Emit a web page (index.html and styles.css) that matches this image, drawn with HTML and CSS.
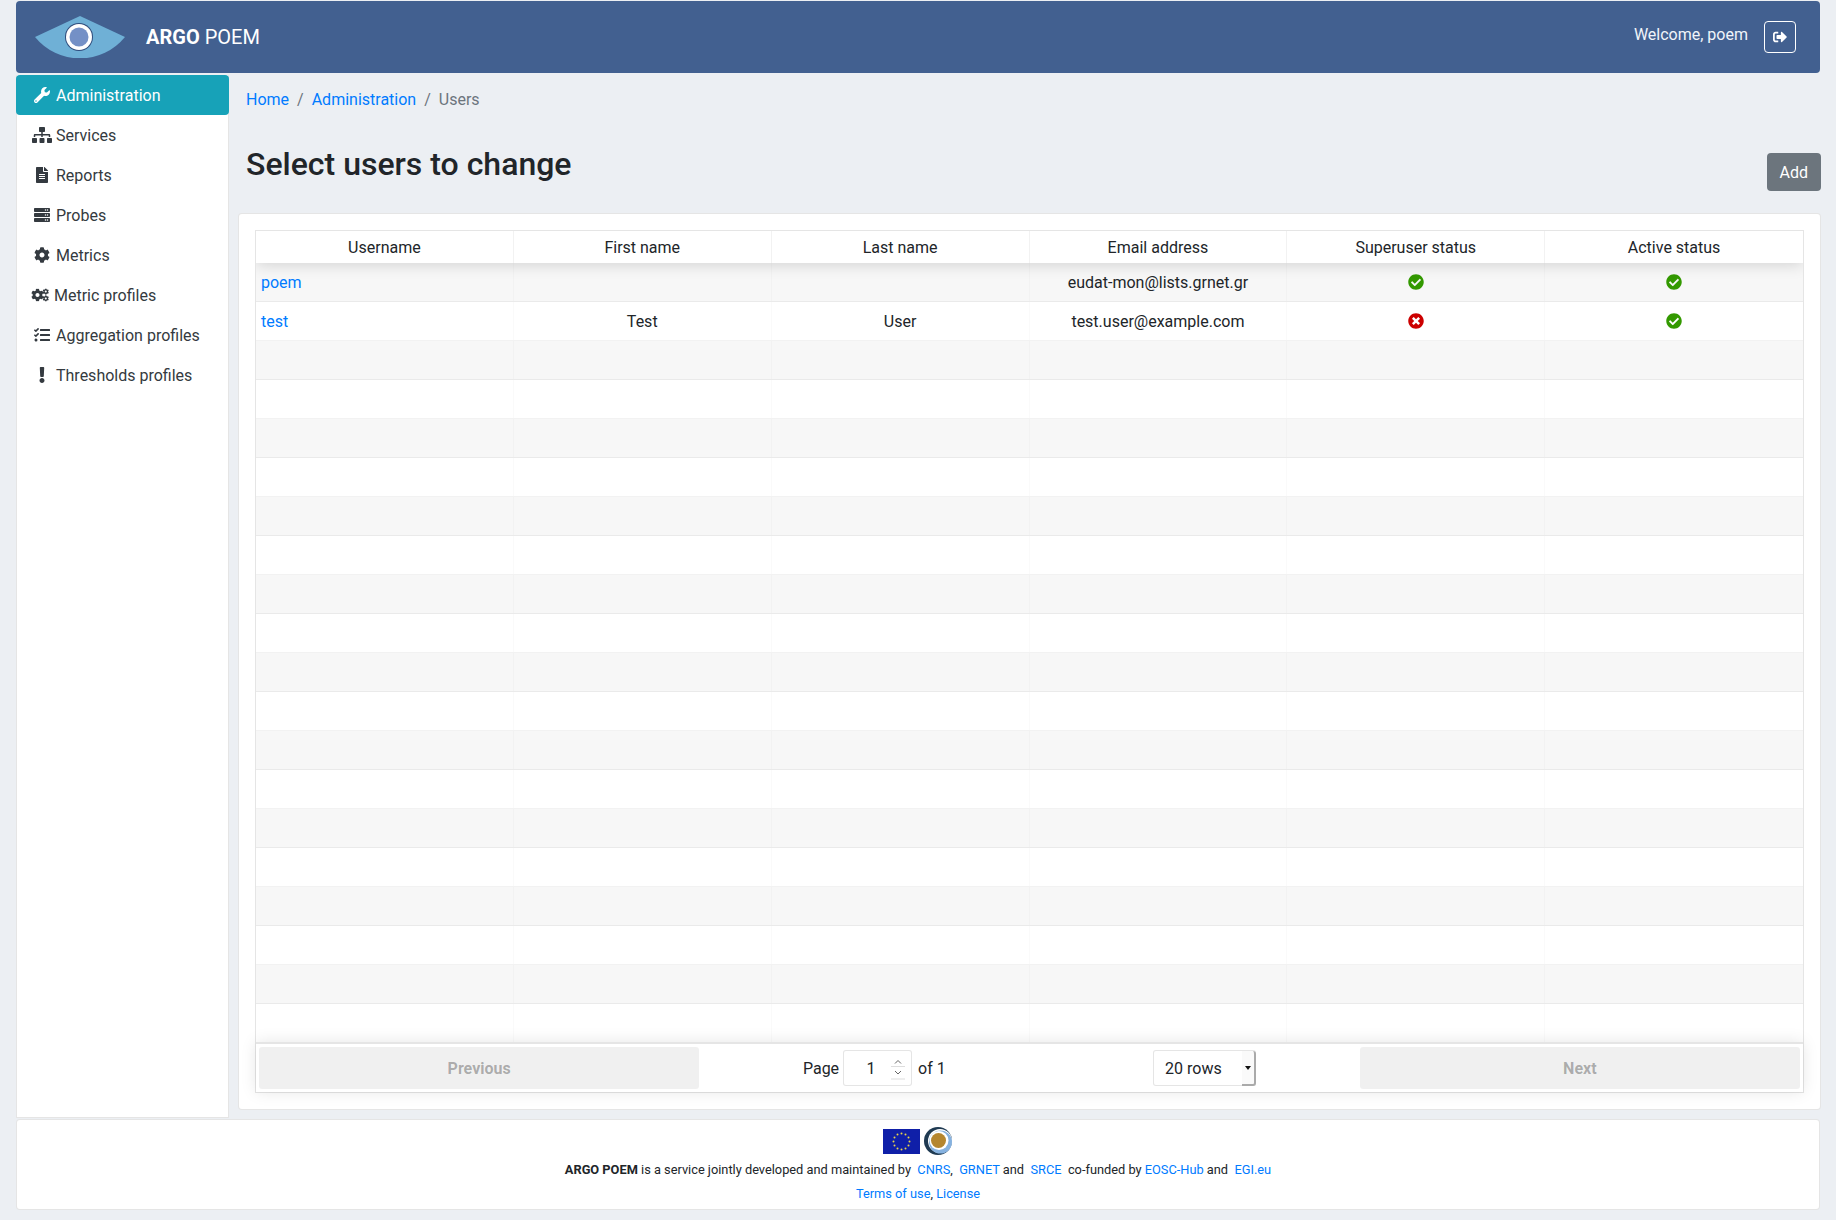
FILE: index.html
```html
<!DOCTYPE html>
<html lang="en">
<head>
  <meta charset="UTF-8">
  <title>ARGO POEM</title>
  <link rel="stylesheet" href="styles.css">
</head>
<body>
  <svg class="sprite" xmlns="http://www.w3.org/2000/svg">
    <symbol id="i-wrench" viewBox="0 0 512 512"><path d="M507.73 109.1c-2.24-9.03-13.54-12.09-20.12-5.51l-74.36 74.36-67.88-11.31-11.31-67.88 74.36-74.36c6.62-6.62 3.43-17.9-5.66-20.16-47.38-11.74-99.55.91-136.58 37.93-39.64 39.64-50.55 97.1-34.05 147.2L18.74 402.76c-24.99 24.99-24.99 65.51 0 90.5 24.99 24.99 65.51 24.99 90.5 0l213.21-213.21c50.12 16.71 107.47 5.68 147.37-34.22 37.07-37.07 49.7-89.32 37.91-136.73zM64 472c-13.25 0-24-10.75-24-24 0-13.26 10.75-24 24-24s24 10.74 24 24c0 13.25-10.75 24-24 24z"/></symbol>
    <symbol id="i-sitemap" viewBox="0 0 640 512"><path d="M128 352H32c-17.67 0-32 14.33-32 32v96c0 17.67 14.33 32 32 32h96c17.67 0 32-14.33 32-32v-96c0-17.67-14.33-32-32-32zm-24-80h192v48h48v-48h192v48h48v-57.59c0-21.17-17.23-38.41-38.41-38.41H344v-64h40c17.67 0 32-14.33 32-32V32c0-17.67-14.33-32-32-32H256c-17.67 0-32 14.33-32 32v96c0 17.67 14.33 32 32 32h40v64H94.41C73.23 224 56 241.23 56 262.41V320h48v-48zm264 80h-96c-17.67 0-32 14.33-32 32v96c0 17.67 14.33 32 32 32h96c17.67 0 32-14.33 32-32v-96c0-17.67-14.33-32-32-32zm240 0h-96c-17.67 0-32 14.33-32 32v96c0 17.67 14.33 32 32 32h96c17.67 0 32-14.33 32-32v-96c0-17.67-14.33-32-32-32z"/></symbol>
    <symbol id="i-file" viewBox="0 0 384 512"><path d="M224 136V0H24C10.7 0 0 10.7 0 24v464c0 13.3 10.7 24 24 24h336c13.3 0 24-10.7 24-24V160H248c-13.2 0-24-10.8-24-24zm64 236c0 6.6-5.4 12-12 12H108c-6.6 0-12-5.4-12-12v-8c0-6.6 5.4-12 12-12h168c6.6 0 12 5.4 12 12v8zm0-64c0 6.6-5.4 12-12 12H108c-6.6 0-12-5.4-12-12v-8c0-6.6 5.4-12 12-12h168c6.6 0 12 5.4 12 12v8zm0-72v8c0 6.6-5.4 12-12 12H108c-6.6 0-12-5.4-12-12v-8c0-6.6 5.4-12 12-12h168c6.6 0 12 5.4 12 12zm96-114.1v6.1H256V0h6.1c6.4 0 12.5 2.5 17 7l97.9 98c4.5 4.5 7 10.6 7 16.9z"/></symbol>
    <symbol id="i-server" viewBox="0 0 512 512"><path d="M480 160H32c-17.673 0-32-14.327-32-32V64c0-17.673 14.327-32 32-32h448c17.673 0 32 14.327 32 32v64c0 17.673-14.327 32-32 32zm-48-88c-13.255 0-24 10.745-24 24s10.745 24 24 24 24-10.745 24-24-10.745-24-24-24zm-64 0c-13.255 0-24 10.745-24 24s10.745 24 24 24 24-10.745 24-24-10.745-24-24-24zm112 248H32c-17.673 0-32-14.327-32-32v-64c0-17.673 14.327-32 32-32h448c17.673 0 32 14.327 32 32v64c0 17.673-14.327 32-32 32zm-48-88c-13.255 0-24 10.745-24 24s10.745 24 24 24 24-10.745 24-24-10.745-24-24-24zm-64 0c-13.255 0-24 10.745-24 24s10.745 24 24 24 24-10.745 24-24-10.745-24-24-24zm112 248H32c-17.673 0-32-14.327-32-32v-64c0-17.673 14.327-32 32-32h448c17.673 0 32 14.327 32 32v64c0 17.673-14.327 32-32 32zm-48-88c-13.255 0-24 10.745-24 24s10.745 24 24 24 24-10.745 24-24-10.745-24-24-24zm-64 0c-13.255 0-24 10.745-24 24s10.745 24 24 24 24-10.745 24-24-10.745-24-24-24z"/></symbol>
    <symbol id="i-cog" viewBox="0 0 512 512"><path d="M487.4 315.7l-42.6-24.6c4.3-23.2 4.3-47 0-70.2l42.6-24.6c4.9-2.8 7.1-8.6 5.5-14-11.1-35.6-30-67.8-54.7-94.6-3.8-4.1-10-5.1-14.8-2.3L380.8 110c-17.9-15.4-38.5-27.3-60.8-35.1V25.8c0-5.6-3.9-10.5-9.4-11.7-36.7-8.2-74.3-7.8-109.2 0-5.5 1.2-9.4 6.1-9.4 11.7V75c-22.2 7.9-42.8 19.8-60.8 35.1L88.7 85.5c-4.9-2.8-11-1.9-14.8 2.3-24.7 26.7-43.6 58.9-54.7 94.6-1.7 5.4.6 11.2 5.5 14L67.3 221c-4.3 23.2-4.3 47 0 70.2l-42.6 24.6c-4.9 2.8-7.1 8.6-5.5 14 11.1 35.6 30 67.8 54.7 94.6 3.8 4.1 10 5.1 14.8 2.3l42.6-24.6c17.9 15.4 38.5 27.3 60.8 35.1v49.2c0 5.6 3.9 10.5 9.4 11.7 36.7 8.2 74.3 7.8 109.2 0 5.5-1.2 9.4-6.1 9.4-11.7v-49.2c22.2-7.9 42.8-19.8 60.8-35.1l42.6 24.6c4.9 2.8 11 1.9 14.8-2.3 24.7-26.7 43.6-58.9 54.7-94.6 1.5-5.5-.7-11.3-5.6-14.1zM256 336c-44.1 0-80-35.9-80-80s35.9-80 80-80 80 35.9 80 80-35.9 80-80 80z"/></symbol>
    <symbol id="i-cogs" viewBox="0 0 640 512"><use href="#i-cog" x="0" y="48" width="416" height="416"/><use href="#i-cog" x="370" y="45" width="205" height="205"/><use href="#i-cog" x="370" y="262" width="205" height="205"/></symbol>
    <symbol id="i-tasks" viewBox="0 0 512 512"><path d="M139.61 35.5a12 12 0 0 0-17 0L58.93 98.81l-22.7-22.12a12 12 0 0 0-17 0L3.53 92.41a12 12 0 0 0 0 17l47.59 47.4a12.78 12.78 0 0 0 17.61 0l15.59-15.62L156.52 69a12.09 12.09 0 0 0 .09-17zm0 159.19a12 12 0 0 0-17 0l-63.68 63.72-22.7-22.1a12 12 0 0 0-17 0L3.53 252a12 12 0 0 0 0 17L51 316.5a12.77 12.77 0 0 0 17.6 0l15.7-15.69 72.2-72.22a12 12 0 0 0 .09-16.9zM64 368c-26.49 0-48.59 21.5-48.59 48S37.53 464 64 464a48 48 0 0 0 0-96zm432 16H208a16 16 0 0 0-16 16v32a16 16 0 0 0 16 16h288a16 16 0 0 0 16-16v-32a16 16 0 0 0-16-16zm0-320H208a16 16 0 0 0-16 16v32a16 16 0 0 0 16 16h288a16 16 0 0 0 16-16V80a16 16 0 0 0-16-16zm0 160H208a16 16 0 0 0-16 16v32a16 16 0 0 0 16 16h288a16 16 0 0 0 16-16v-32a16 16 0 0 0-16-16z"/></symbol>
    <symbol id="i-excl" viewBox="0 0 192 512"><path d="M176 432c0 44.112-35.888 80-80 80s-80-35.888-80-80 35.888-80 80-80 80 35.888 80 80zM25.26 25.199l13.6 272C39.499 309.972 50.041 320 62.83 320h66.34c12.789 0 23.331-10.028 23.97-22.801l13.6-272C167.425 11.49 156.496 0 142.77 0H49.23C35.504 0 24.575 11.49 25.26 25.199z"/></symbol>
    <symbol id="i-signout" viewBox="0 0 512 512"><path d="M497 273L329 441c-15 15-41 4.5-41-17v-96H152c-13.3 0-24-10.7-24-24v-96c0-13.3 10.7-24 24-24h136V88c0-21.4 25.9-32 41-17l168 168c9.3 9.4 9.3 24.6 0 34zM192 436v-40c0-6.6-5.4-12-12-12H96c-17.7 0-32-14.3-32-32V160c0-17.7 14.3-32 32-32h84c6.6 0 12-5.4 12-12V76c0-6.6-5.4-12-12-12H96c-53 0-96 43-96 96v192c0 53 43 96 96 96h84c6.6 0 12-5.4 12-12z"/></symbol>
    <symbol id="i-check" viewBox="0 0 512 512"><path d="M504 256c0 136.967-111.033 248-248 248S8 392.967 8 256 119.033 8 256 8s248 111.033 248 248zM227.314 387.314l184-184c6.248-6.248 6.248-16.379 0-22.627l-22.627-22.627c-6.248-6.249-16.379-6.249-22.628 0L216 308.118l-70.059-70.059c-6.248-6.248-16.379-6.248-22.628 0l-22.627 22.627c-6.248 6.248-6.248 16.379 0 22.627l104 104c6.249 6.249 16.379 6.249 22.628.001z"/></symbol>
    <symbol id="i-times" viewBox="0 0 512 512"><path d="M256 8C119 8 8 119 8 256s111 248 248 248 248-111 248-248S393 8 256 8zm121.6 313.1c4.7 4.7 4.7 12.3 0 17L338 377.6c-4.7 4.7-12.3 4.7-17 0L256 312l-65.1 65.6c-4.7 4.7-12.3 4.7-17 0L134.4 338c-4.7-4.7-4.7-12.3 0-17l65.6-65-65.6-65.1c-4.7-4.7-4.7-12.3 0-17l39.6-39.6c4.7-4.7 12.3-4.7 17 0l65 65.7 65.1-65.6c4.7-4.7 12.3-4.7 17 0l39.6 39.6c4.7 4.7 4.7 12.3 0 17L312 256l65.6 65.1z"/></symbol>
  </svg>

  <div class="page">
    <header class="topbar">
      <div class="brand">
        <svg class="logo" viewBox="0 0 90 42">
          <path d="M0 21 L45 0 L90 21 A58 58 0 0 1 0 21 Z" fill="#6fb0d6"/>
          <circle cx="44" cy="21" r="14" fill="#2f4c7c"/>
          <circle cx="44" cy="21" r="13" fill="#fff"/>
          <circle cx="44" cy="21" r="9.5" fill="#7490c6"/>
        </svg>
        <span class="brand-name"><b>ARGO</b> POEM</span>
      </div>
      <div class="userbox">
        <span class="welcome">Welcome, poem</span>
        <a class="logout" href="#"><svg class="icon"><use href="#i-signout"/></svg></a>
      </div>
    </header>

    <div class="layout">
      <nav class="sidebar">
        <a class="nav-item active" href="#"><span class="nav-icon"><svg class="ic-16"><use href="#i-wrench"/></svg></span>Administration</a>
        <a class="nav-item" href="#"><span class="nav-icon"><svg class="ic-20"><use href="#i-sitemap"/></svg></span>Services</a>
        <a class="nav-item" href="#"><span class="nav-icon"><svg class="ic-12"><use href="#i-file"/></svg></span>Reports</a>
        <a class="nav-item" href="#"><span class="nav-icon"><svg class="ic-16"><use href="#i-server"/></svg></span>Probes</a>
        <a class="nav-item" href="#"><span class="nav-icon"><svg class="ic-16"><use href="#i-cog"/></svg></span>Metrics</a>
        <a class="nav-item tight" href="#"><span class="nav-icon"><svg class="ic-20"><use href="#i-cogs"/></svg></span>Metric profiles</a>
        <a class="nav-item" href="#"><span class="nav-icon"><svg class="ic-16"><use href="#i-tasks"/></svg></span>Aggregation profiles</a>
        <a class="nav-item" href="#"><span class="nav-icon"><svg class="ic-6"><use href="#i-excl"/></svg></span>Thresholds profiles</a>
      </nav>

      <main class="content">
        <ol class="breadcrumb">
          <li><a href="#">Home</a></li>
          <li class="sep">/</li>
          <li><a href="#">Administration</a></li>
          <li class="sep">/</li>
          <li class="current">Users</li>
        </ol>

        <div class="title-row">
          <h2>Select users to change</h2>
          <a class="btn-add" href="#">Add</a>
        </div>

        <section class="card">
          <div class="rtable">
            <div class="thead">
              <div class="cell">Username</div><div class="cell">First name</div><div class="cell">Last name</div><div class="cell">Email address</div><div class="cell">Superuser status</div><div class="cell">Active status</div>
            </div>
            <div class="tbody">
              <div class="row"><div class="cell left"><a href="#">poem</a></div><div class="cell"></div><div class="cell"></div><div class="cell">eudat-mon@lists.grnet.gr</div><div class="cell"><svg class="status ok"><use href="#i-check"/></svg></div><div class="cell"><svg class="status ok"><use href="#i-check"/></svg></div></div>
              <div class="row"><div class="cell left"><a href="#">test</a></div><div class="cell">Test</div><div class="cell">User</div><div class="cell">test.user@example.com</div><div class="cell"><svg class="status bad"><use href="#i-times"/></svg></div><div class="cell"><svg class="status ok"><use href="#i-check"/></svg></div></div>
              <div class="row"><div class="cell"></div><div class="cell"></div><div class="cell"></div><div class="cell"></div><div class="cell"></div><div class="cell"></div></div>
              <div class="row"><div class="cell"></div><div class="cell"></div><div class="cell"></div><div class="cell"></div><div class="cell"></div><div class="cell"></div></div>
              <div class="row"><div class="cell"></div><div class="cell"></div><div class="cell"></div><div class="cell"></div><div class="cell"></div><div class="cell"></div></div>
              <div class="row"><div class="cell"></div><div class="cell"></div><div class="cell"></div><div class="cell"></div><div class="cell"></div><div class="cell"></div></div>
              <div class="row"><div class="cell"></div><div class="cell"></div><div class="cell"></div><div class="cell"></div><div class="cell"></div><div class="cell"></div></div>
              <div class="row"><div class="cell"></div><div class="cell"></div><div class="cell"></div><div class="cell"></div><div class="cell"></div><div class="cell"></div></div>
              <div class="row"><div class="cell"></div><div class="cell"></div><div class="cell"></div><div class="cell"></div><div class="cell"></div><div class="cell"></div></div>
              <div class="row"><div class="cell"></div><div class="cell"></div><div class="cell"></div><div class="cell"></div><div class="cell"></div><div class="cell"></div></div>
              <div class="row"><div class="cell"></div><div class="cell"></div><div class="cell"></div><div class="cell"></div><div class="cell"></div><div class="cell"></div></div>
              <div class="row"><div class="cell"></div><div class="cell"></div><div class="cell"></div><div class="cell"></div><div class="cell"></div><div class="cell"></div></div>
              <div class="row"><div class="cell"></div><div class="cell"></div><div class="cell"></div><div class="cell"></div><div class="cell"></div><div class="cell"></div></div>
              <div class="row"><div class="cell"></div><div class="cell"></div><div class="cell"></div><div class="cell"></div><div class="cell"></div><div class="cell"></div></div>
              <div class="row"><div class="cell"></div><div class="cell"></div><div class="cell"></div><div class="cell"></div><div class="cell"></div><div class="cell"></div></div>
              <div class="row"><div class="cell"></div><div class="cell"></div><div class="cell"></div><div class="cell"></div><div class="cell"></div><div class="cell"></div></div>
              <div class="row"><div class="cell"></div><div class="cell"></div><div class="cell"></div><div class="cell"></div><div class="cell"></div><div class="cell"></div></div>
              <div class="row"><div class="cell"></div><div class="cell"></div><div class="cell"></div><div class="cell"></div><div class="cell"></div><div class="cell"></div></div>
              <div class="row"><div class="cell"></div><div class="cell"></div><div class="cell"></div><div class="cell"></div><div class="cell"></div><div class="cell"></div></div>
              <div class="row"><div class="cell"></div><div class="cell"></div><div class="cell"></div><div class="cell"></div><div class="cell"></div><div class="cell"></div></div>
            </div>
            <div class="pager">
              <div class="pager-side"><button class="pager-btn" disabled>Previous</button></div>
              <div class="pager-center">
                <span class="page-info">Page <span class="page-box"><input class="page-input" type="number" value="1" min="1"><svg class="spin" viewBox="0 0 14 22"><path d="M4 5.5 7 2.5 10 5.5M4 13 7 16 10 13" fill="none" stroke="#666" stroke-width="1"/><path d="M0 8.5H14M0 21H14" fill="none" stroke="#ddd" stroke-width="1"/></svg></span> of 1</span>
                <span class="rows-box"><select class="rows-select"><option>20 rows</option><option>50 rows</option></select></span>
              </div>
              <div class="pager-side"><button class="pager-btn" disabled>Next</button></div>
            </div>
          </div>
        </section>
      </main>
    </div>

    <footer class="footer">
      <div class="footer-logos">
        <svg class="eu-flag" viewBox="0 0 37 25">
          <rect width="37" height="25" fill="#0f1fa8"/>
          <g fill="#e8d44a">
            <circle cx="18.5" cy="4.5" r="1"/><circle cx="22.5" cy="5.5" r="1"/><circle cx="25.5" cy="8.5" r="1"/><circle cx="26.5" cy="12.5" r="1"/><circle cx="25.5" cy="16.5" r="1"/><circle cx="22.5" cy="19.5" r="1"/><circle cx="18.5" cy="20.5" r="1"/><circle cx="14.5" cy="19.5" r="1"/><circle cx="11.5" cy="16.5" r="1"/><circle cx="10.5" cy="12.5" r="1"/><circle cx="11.5" cy="8.5" r="1"/><circle cx="14.5" cy="5.5" r="1"/>
          </g>
        </svg>
        <svg class="egi-logo" viewBox="0 0 30 28">
          <circle cx="14" cy="14" r="14" fill="#1f3a52"/>
          <circle cx="16" cy="14" r="12" fill="#fff"/>
          <circle cx="16.5" cy="15" r="11.5" fill="#86b2e0"/>
          <circle cx="15" cy="13.5" r="9.5" fill="#fff"/>
          <circle cx="14.5" cy="13.5" r="7.5" fill="#b5862f"/>
        </svg>
      </div>
      <p class="footer-line"><b>ARGO POEM</b> is a service jointly developed and maintained by &nbsp;<a href="#">CNRS</a>,&nbsp; <a href="#">GRNET</a> and &nbsp;<a href="#">SRCE</a> &nbsp;co-funded by <a href="#">EOSC-Hub</a> and &nbsp;<a href="#">EGI.eu</a></p>
      <p class="footer-line"><a href="#">Terms of use</a>, <a href="#">License</a></p>
    </footer>
  </div>
</body>
</html>
```

FILE: styles.css
```css
* {
  box-sizing: border-box;
}
body {
  margin: 0;
  background-color: #eceff3;
  color: #212529;
  font-family: Roboto, "Liberation Sans", sans-serif;
  font-size: 16px;
  line-height: 24px;
}
a {
  color: #007bff;
  text-decoration: none;
}
.sprite {
  display: none;
}
.page {
  padding: 1px 16px 0;
}

/* top bar */
.topbar {
  display: flex;
  align-items: center;
  justify-content: space-between;
  height: 72px;
  margin-bottom: 2px;
  padding: 0 24px 0 19px;
  background-color: #426090;
  border-radius: 4px;
  color: #fff;
}
.brand {
  display: flex;
  align-items: center;
  gap: 21px;
}
.logo {
  width: 90px;
  height: 42px;
}
.brand-name {
  font-size: 20px;
}
.brand-name b {
  font-weight: 700;
}
.userbox {
  display: flex;
  align-items: center;
  gap: 16px;
  color: #f0f4fa;
}
.welcome {
  margin-bottom: 4px;
}
.logout {
  display: flex;
  align-items: center;
  justify-content: center;
  width: 32px;
  height: 32px;
  border: 1px solid #fff;
  border-radius: 4px;
}
.logout .icon {
  width: 14px;
  height: 14px;
  fill: #fff;
}

/* main layout */
.layout {
  display: grid;
  grid-template-columns: 213px 1fr;
  gap: 9px;
  height: 1044px;
}
.sidebar {
  background: #fff;
  border: 1px solid rgba(0, 0, 0, 0.1);
  border-top: none;
  margin-bottom: 1px;
}
.nav-item {
  display: flex;
  align-items: center;
  height: 40px;
  padding: 2px 0 0 39px;
  color: #343a40;
}
.nav-item.tight {
  padding-left: 37px;
}
.nav-item.active {
  margin: 0 -1px;
  padding-left: 40px;
  background-color: #17a2b8;
  border-radius: 4px;
  color: #fff;
}
.nav-icon {
  display: flex;
  justify-content: center;
  align-items: center;
  width: 24px;
  height: 20px;
  margin: -2px 2px 0 -26px;
  fill: #343a40;
}
.nav-item.active .nav-icon {
  fill: #fff;
}
.nav-item.tight .nav-icon {
  margin-left: -25px;
  margin-right: 1px;
}
.ic-6 { width: 6px; height: 16px; }
.ic-12 { width: 12px; height: 16px; }
.ic-16 { width: 16px; height: 16px; }
.ic-20 { width: 20px; height: 16px; }

/* content */
.content {
  display: flex;
  flex-direction: column;
  min-width: 0;
  padding-bottom: 9px;
}
.breadcrumb {
  display: flex;
  gap: 8px;
  list-style: none;
  margin: 13px 0 33px;
  padding: 0 8px;
}
.sep, .current {
  color: #6c757d;
}
.title-row {
  display: flex;
  align-items: flex-start;
  justify-content: space-between;
  height: 46px;
  margin-bottom: 22px;
  padding-left: 8px;
}
h2 {
  margin: 0;
  font-size: 32px;
  font-weight: 500;
  line-height: 38px;
}
.btn-add {
  margin: 8px -1px 0 0;
  padding: 8px 13px 6px;
  background-color: #6c757d;
  border-radius: 4px;
  color: #fff;
}
.card {
  display: flex;
  flex: 1;
  min-height: 0;
  margin-right: -1px;
  padding: 16px;
  background: #fff;
  border: 1px solid rgba(0, 0, 0, 0.1);
  border-radius: 4px;
}

/* table */
.rtable {
  display: flex;
  flex-direction: column;
  flex: 1;
  min-width: 0;
  border: 1px solid rgba(0, 0, 0, 0.1);
}
.thead, .row {
  display: grid;
  grid-template-columns: repeat(6, 1fr);
}
.thead {
  position: relative;
  z-index: 1;
  height: 32px;
  background: #fff;
  box-shadow: 0 2px 15px rgba(0, 0, 0, 0.15);
  clip-path: inset(0 0 -20px 0);
}
.thead .cell {
  border-right: 1px solid rgba(0, 0, 0, 0.05);
}
/* last row runs 1px under the pager */
.tbody {
  display: grid;
  grid-template-rows: repeat(20, 39px);
  flex: 0 0 779px;
  min-height: 0;
}
.row {
  border-bottom: 1px solid rgba(0, 0, 0, 0.05);
}
.row:nth-child(odd) {
  background-color: rgba(0, 0, 0, 0.03);
}
.cell {
  display: flex;
  align-items: center;
  justify-content: center;
  padding: 2px 5px 0;
  border-right: 1px solid rgba(0, 0, 0, 0.02);
}
.cell:last-child, .thead .cell:last-child {
  border-right: none;
}
.cell.left {
  justify-content: flex-start;
}
.status {
  width: 16px;
  height: 16px;
  margin-top: -2px;
}
.status.ok {
  fill: #339900;
}
.status.bad {
  fill: #cc0000;
}

/* pagination */
.pager {
  position: relative;
  display: flex;
  height: 50px;
  padding: 3px;
  background: #fff;
  border-top: 2px solid rgba(0, 0, 0, 0.1);
  box-shadow: 0 0 15px rgba(0, 0, 0, 0.1);
}
.pager-side {
  flex: 1;
}
.pager-btn {
  display: block;
  width: 100%;
  height: 100%;
  border: none;
  border-radius: 3px;
  background: rgba(0, 0, 0, 0.06);
  color: rgba(0, 0, 0, 0.3);
  font: 700 16px Roboto, sans-serif;
}
.pager-center {
  display: flex;
  flex: 1.5;
  align-items: center;
  justify-content: space-around;
}
.page-info {
  display: flex;
  align-items: center;
  gap: 4px;
  padding-top: 2px;
  white-space: nowrap;
}
.page-box {
  position: relative;
  display: block;
  margin: -2px 2px 0 0;
}
.page-input {
  display: block;
  width: 69px;
  height: 36px;
  padding: 1px 18px 0 5px;
  border: 1px solid rgba(0, 0, 0, 0.1);
  border-radius: 3px;
  background: #fff;
  color: #212529;
  font: 16px Roboto, sans-serif;
  text-align: center;
  appearance: textfield;
}
.page-input::-webkit-inner-spin-button {
  display: none;
}
.spin {
  position: absolute;
  top: 8px;
  right: 7px;
  width: 14px;
  height: 22px;
}
.rows-box {
  position: relative;
  display: block;
}
/* native arrow strip of the select */
.rows-box::before {
  content: "";
  position: absolute;
  top: 1px;
  right: 0;
  bottom: 0;
  width: 12px;
  background: #fafafa;
  border-right: 2px solid #aaa;
  border-bottom: 2px solid #aaa;
  border-radius: 0 3px 3px 0;
  pointer-events: none;
}
.rows-box::after {
  content: "";
  position: absolute;
  top: 16px;
  right: 5px;
  border-top: 4px solid #111;
  border-left: 3px solid transparent;
  border-right: 3px solid transparent;
  pointer-events: none;
}
.rows-select {
  display: block;
  width: 103px;
  height: 36px;
  padding: 0 7px 0 11px;
  border: 1px solid rgba(0, 0, 0, 0.1);
  border-radius: 3px;
  background: #fff;
  color: #212529;
  font: 16px Roboto, sans-serif;
  appearance: none;
}

/* footer */
.footer {
  height: 91px;
  padding-top: 7px;
  background: #fff;
  border: 1px solid rgba(0, 0, 0, 0.1);
  border-radius: 4px;
  text-align: center;
  font-size: 12.8px;
}
.footer-logos {
  display: flex;
  justify-content: center;
  align-items: flex-start;
  gap: 4px;
  height: 28px;
  margin-bottom: 3px;
}
.eu-flag {
  width: 37px;
  height: 25px;
  margin-top: 2px;
}
.egi-logo {
  width: 30px;
  height: 28px;
}
.footer-line {
  margin: 0;
  line-height: 24px;
}
.footer-line b {
  font-weight: 700;
}
```
